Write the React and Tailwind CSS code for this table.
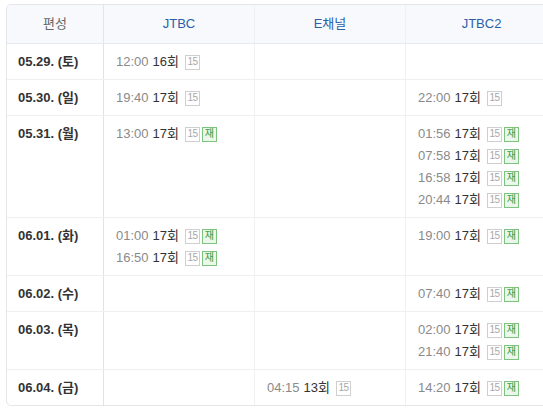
import React from "react";

const rows = [
  { date: "05.29. (토)", c: [[["12:00", "16회", false]], [], []] },
  { date: "05.30. (일)", c: [[["19:40", "17회", false]], [], [["22:00", "17회", false]]] },
  {
    date: "05.31. (월)",
    c: [
      [["13:00", "17회", true]],
      [],
      [
        ["01:56", "17회", true],
        ["07:58", "17회", true],
        ["16:58", "17회", true],
        ["20:44", "17회", true],
      ],
    ],
  },
  {
    date: "06.01. (화)",
    c: [
      [
        ["01:00", "17회", true],
        ["16:50", "17회", true],
      ],
      [],
      [["19:00", "17회", true]],
    ],
  },
  { date: "06.02. (수)", c: [[], [], [["07:40", "17회", true]]] },
  {
    date: "06.03. (목)",
    c: [
      [],
      [],
      [
        ["02:00", "17회", true],
        ["21:40", "17회", true],
      ],
    ],
  },
  { date: "06.04. (금)", c: [[], [["04:15", "13회", false]], [["14:20", "17회", true]]] },
];

function Entry({ time, ep, re }) {
  return (
    <div className="flex items-center h-[22px] leading-[22px] whitespace-nowrap">
      <span className="text-[#8a8a8a]">{time}</span>
      <span className="text-[#333] ml-[4px]">{ep}</span>
      <span className="ml-[6px] inline-flex items-center justify-center w-[15px] h-[15px] border border-[#cfcfcf] text-[#a8a8a8] text-[10px] leading-none tracking-[-0.5px]">
        15
      </span>
      {re && (
        <span className="ml-[2px] inline-flex items-center justify-center w-[15px] h-[15px] border border-[#7cc47e] bg-[#ebf7ea] text-[#2f9a3c] text-[10px] leading-none">
          재
        </span>
      )}
    </div>
  );
}

export default function App() {
  return (
    <div
      className="w-[543px] h-[413px] overflow-hidden bg-white pt-[4px] pl-[6px]"
      style={{ fontFamily: '"Liberation Sans", "Noto Sans CJK KR", sans-serif' }}
    >
      <div className="w-[560px] border border-[#e4e6ea] rounded-[5px] text-[13px]">
        <div className="grid grid-cols-[97px_151px_151px_151px] bg-[#f7f9fc] border-b border-[#e6e9ee] rounded-t-[5px] h-[39px]">
          <div className="flex items-center justify-center text-[#666] border-r border-[#e2e4e8]">편성</div>
          <div className="flex items-center justify-center text-[#2b5fa8] border-r border-[#eef0f3]">JTBC</div>
          <div className="flex items-center justify-center text-[#2b5fa8] border-r border-[#eef0f3]">E채널</div>
          <div className="flex items-center justify-center text-[#2b5fa8]">JTBC2</div>
        </div>
        {rows.map((r, i) => (
          <div
            key={i}
            className={
              "grid grid-cols-[97px_151px_151px_151px] " +
              (i < rows.length - 1 ? "border-b border-[#efefef]" : "")
            }
          >
            <div className="pl-[11px] pt-[7px] pb-[6px] border-r border-[#e2e2e2]">
              <div className="h-[22px] leading-[22px] font-bold text-[#333] whitespace-nowrap">{r.date}</div>
            </div>
            {r.c.map((cell, j) => (
              <div
                key={j}
                className={
                  "pl-[12px] pt-[7px] pb-[6px] min-h-[35px] " +
                  (j < 2 ? "border-r border-[#f0f0f0]" : "")
                }
              >
                {cell.map((e, k) => (
                  <Entry key={k} time={e[0]} ep={e[1]} re={e[2]} />
                ))}
              </div>
            ))}
          </div>
        ))}
      </div>
    </div>
  );
}
